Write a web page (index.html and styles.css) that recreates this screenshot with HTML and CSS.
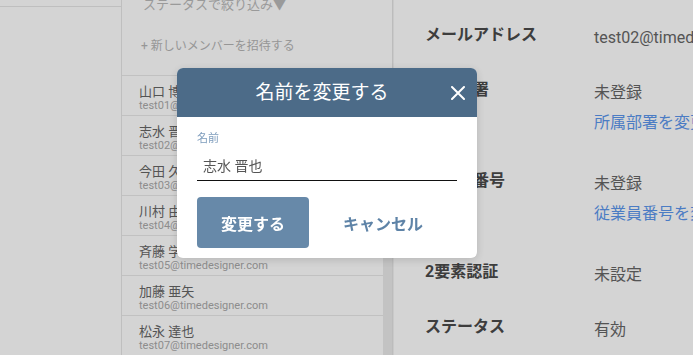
FILE: index.html
```html
<!DOCTYPE html>
<html lang="ja">
<head>
    <meta charset="UTF-8">
    <meta name="viewport" content="width=device-width, initial-scale=1.0">
    <title>メンバー管理</title>
    <link rel="stylesheet" href="styles.css">
</head>
<body>
    <div class="app">
        <aside class="sidebar">
            <div class="sidebar-head"></div>
        </aside>

        <section class="members">
            <div class="members-head">
                <div class="filter">ステータスで絞り込み▼</div>
                <div class="invite">+ 新しいメンバーを招待する</div>
            </div>
            <ul class="member-list">
                <li class="member"><span class="member-name">山口 博之</span><span class="member-mail">test01@timedesigner.com</span></li>
                <li class="member"><span class="member-name">志水 晋也</span><span class="member-mail">test02@timedesigner.com</span></li>
                <li class="member"><span class="member-name">今田 久美子</span><span class="member-mail">test03@timedesigner.com</span></li>
                <li class="member"><span class="member-name">川村 由紀</span><span class="member-mail">test04@timedesigner.com</span></li>
                <li class="member"><span class="member-name">斉藤 学</span><span class="member-mail">test05@timedesigner.com</span></li>
                <li class="member"><span class="member-name">加藤 亜矢</span><span class="member-mail">test06@timedesigner.com</span></li>
                <li class="member"><span class="member-name">松永 達也</span><span class="member-mail">test07@timedesigner.com</span></li>
                <li class="member"><span class="member-name">中村 健</span><span class="member-mail">test08@timedesigner.com</span></li>
            </ul>
        </section>

        <section class="detail">
            <div class="detail-row">
                <div class="detail-label">メールアドレス</div>
                <div class="detail-value">test02@timedesigner.com</div>
            </div>
            <div class="detail-row">
                <div class="detail-label">所属部署</div>
                <div class="detail-value">
                    未登録
                    <a class="detail-link" href="#">所属部署を変更する</a>
                </div>
            </div>
            <div class="detail-row">
                <div class="detail-label">従業員番号</div>
                <div class="detail-value">
                    未登録
                    <a class="detail-link" href="#">従業員番号を変更する</a>
                </div>
            </div>
            <div class="detail-row">
                <div class="detail-label">2要素認証</div>
                <div class="detail-value">未設定</div>
            </div>
            <div class="detail-row">
                <div class="detail-label">ステータス</div>
                <div class="detail-value">有効</div>
            </div>
        </section>
    </div>

    <div class="overlay"></div>

    <div class="modal">
        <div class="modal-head">
            名前を変更する
            <button class="modal-close" aria-label="閉じる">
                <svg width="14" height="14" viewBox="0 0 14 14">
                    <path d="M1 1L13 13M13 1L1 13" stroke="#fff" stroke-width="2" stroke-linecap="round"/>
                </svg>
            </button>
        </div>
        <div class="modal-body">
            <label class="field-label" for="nameInput">名前</label>
            <input class="field-input" id="nameInput" type="text" value="志水 晋也">
        </div>
        <div class="modal-actions">
            <button class="btn btn-primary">変更する</button>
            <button class="btn btn-text">キャンセル</button>
        </div>
    </div>
</body>
</html>
```

FILE: styles.css
```css
body {
    margin: 0;
    background-color: #fff;
    font-family: 'Roboto', 'Noto Sans CJK JP', sans-serif;
    overflow: hidden;
}
.app {
    display: flex;
    height: 100vh;
}
.sidebar {
    width: 122px;
    flex-shrink: 0;
    border-right: 1px solid #e6e6e6;
    box-sizing: border-box;
}
.sidebar-head {
    height: 6px;
    border-bottom: 1px solid #e6e6e6;
}
.members {
    width: 271px;
    flex-shrink: 0;
    display: flex;
    flex-direction: column;
    border-right: 1px solid #e2e2e2;
    box-sizing: border-box;
}
.members-head {
    padding-left: 21px;
}
.filter {
    margin-top: -5px;
    font-size: 13px;
    line-height: 20px;
    color: #bababa;
}
.invite {
    margin: 21px 0 19px -2px;
    font-size: 12px;
    line-height: 20px;
    color: #b5b5b5;
}
/* the list's scroll track is drawn as a plain stripe on the right */
.member-list {
    flex: 1;
    margin: 0;
    padding: 0;
    list-style: none;
    border-top: 1px solid #e8e8e8;
    border-right: 9px solid #ebebeb;
    overflow: hidden;
}
.member {
    display: flex;
    flex-direction: column;
    padding: 8px 0 3px 17px;
    border-bottom: 1px solid #e8e8e8;
}
.member-name {
    font-size: 13px;
    line-height: 16px;
    color: #666;
}
.member-mail {
    font-size: 11px;
    line-height: 12px;
    color: #aaa;
}
.detail {
    flex: 1;
    padding: 10px 0 0 31px;
    border-left: 1px solid #f2f2f2;
    overflow: hidden;
    white-space: nowrap;
}
.detail-row {
    display: flex;
    padding: 13px 0 12px;
}
.detail-label {
    width: 169px;
    flex-shrink: 0;
    font-size: 16px;
    font-weight: bold;
    line-height: 24px;
    color: #4a4a4a;
}
.detail-value {
    font-size: 16px;
    line-height: 30px;
    color: #666;
}
.detail-link {
    display: block;
    margin-bottom: 6px;
    color: #5b96ec;
    text-decoration: none;
}
.overlay {
    position: fixed;
    inset: 0;
    background-color: rgba(0, 0, 0, 0.17);
}
.modal {
    position: fixed;
    left: 177px;
    top: 68px;
    width: 300px;
    background-color: #fff;
    border-radius: 6px;
    overflow: hidden;
    box-shadow: 0 2px 10px rgba(0, 0, 0, 0.15);
}
.modal-head {
    position: relative;
    height: 49px;
    padding-right: 10px;
    line-height: 49px;
    text-align: center;
    font-size: 19px;
    color: #fff;
    background-color: #4c6b88;
}
.modal-close {
    position: absolute;
    top: 18px;
    right: 12px;
    width: 14px;
    height: 14px;
    padding: 0;
    border: none;
    background: none;
    cursor: pointer;
    display: flex;
}
.modal-body {
    padding: 15px 20px 0;
}
.field-label {
    display: block;
    font-size: 11px;
    line-height: 14px;
    color: #7d9cbc;
}
.field-input {
    display: block;
    width: 100%;
    height: 34px;
    margin-top: 1px;
    padding: 6px 6px 4px;
    box-sizing: border-box;
    border: none;
    border-bottom: 1px solid #111;
    outline: none;
    font-family: inherit;
    font-size: 14px;
    color: #555;
}
.modal-actions {
    display: flex;
    gap: 18px;
    padding: 16px 20px 10px;
}
.btn {
    width: 112px;
    height: 51px;
    border: none;
    border-radius: 4px;
    font-family: inherit;
    font-size: 16px;
    font-weight: bold;
    cursor: pointer;
}
.btn-primary {
    background-color: #6789a9;
    color: #fff;
}
.btn-text {
    background: none;
    color: #5e83a7;
}
```
